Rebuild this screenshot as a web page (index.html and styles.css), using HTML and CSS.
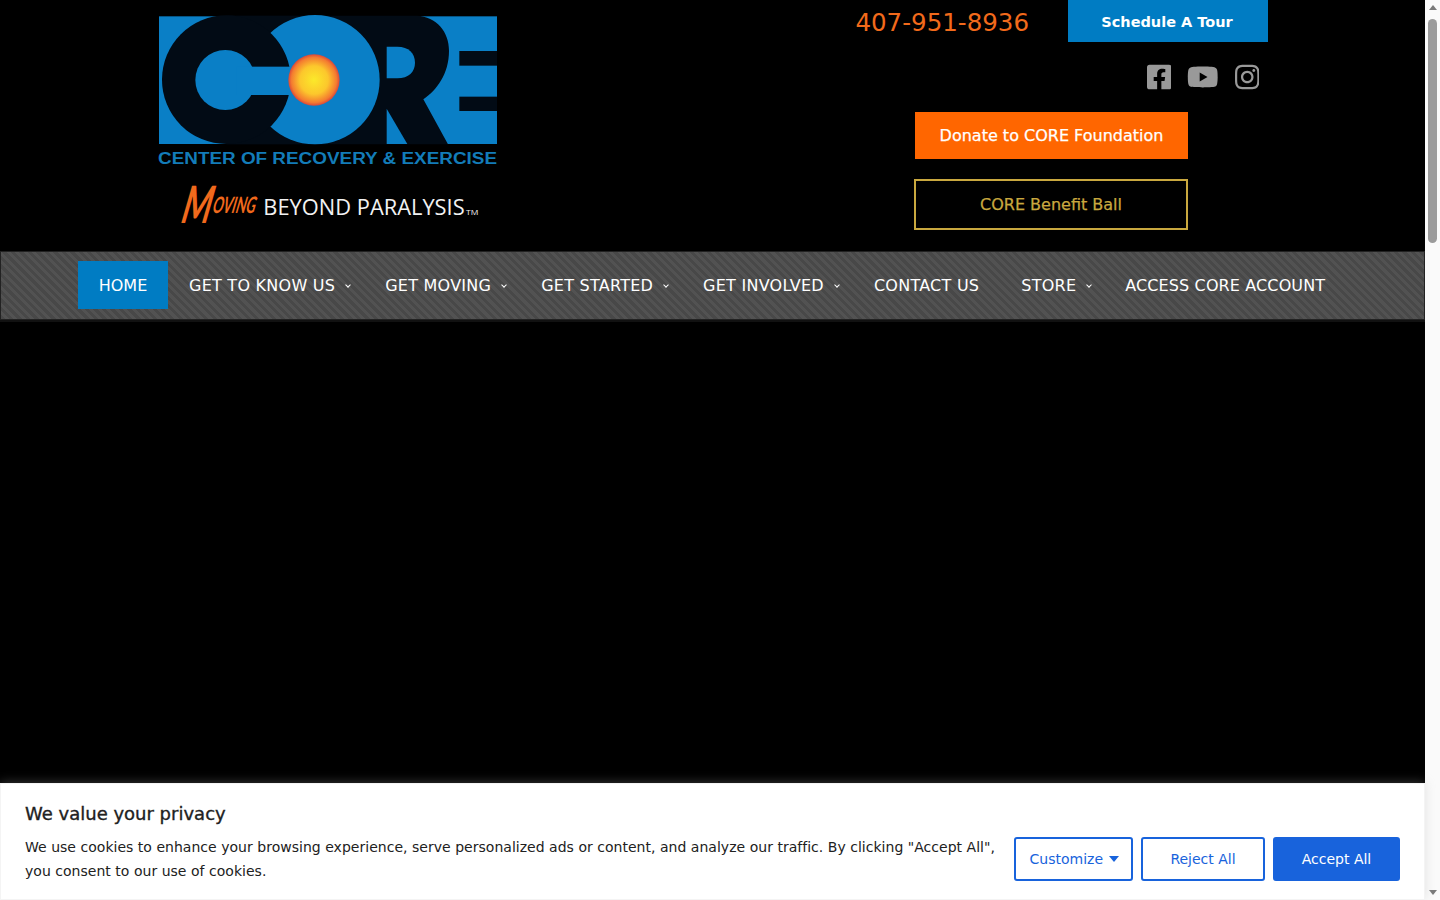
FILE: index.html
```html
<!DOCTYPE html>
<html lang="en">
<head>
    <meta charset="UTF-8">
    <meta name="viewport" content="width=device-width, initial-scale=1.0">
    <title>Center of Recovery &amp; Exercise</title>
    <link rel="stylesheet" href="styles.css">
</head>
<body>
    <div class="page">
        <div class="content">
            <header class="site-header">
                <a class="logo" href="#">
                    <svg viewBox="0 0 1140 720" width="380" height="240" role="img" aria-label="CORE logo">
                        <defs>
                            <radialGradient id="sun">
                                <stop offset="0" stop-color="#fbe92a"/>
                                <stop offset="0.55" stop-color="#fcc72c"/>
                                <stop offset="0.88" stop-color="#f47b30"/>
                                <stop offset="1" stop-color="#d9483a"/>
                            </radialGradient>
                        </defs>
                        <rect x="57" y="49" width="1014" height="383" fill="#0a7fc6"/>
                        <rect class="logo-dark" x="259" y="47" width="300" height="386"/>
                        <path class="logo-dark" d="M500 47H830C890 50 927 95 927 152C927 222 890 270 850 298L924 433H500Z"/>
                        <rect class="logo-dark" x="958" y="153" width="113" height="44"/>
                        <rect class="logo-dark" x="958" y="290" width="113" height="43"/>
                        <path d="M740 326L802 432H740Z" fill="#0a7fc6"/>
                        <circle cx="525" cy="239" r="194" fill="#0a7fc6"/>
                        <path d="M740 140H772C806 140 825 160 825 188C825 215 806 235 772 235H740Z" fill="#0a7fc6"/>
                        <circle class="logo-dark" cx="259" cy="239" r="193"/>
                        <circle cx="256" cy="240" r="90" fill="#0a7fc6"/>
                        <rect x="290" y="200" width="170" height="85" fill="#0a7fc6"/>
                        <circle cx="522" cy="240" r="77" fill="url(#sun)"/>
                        <text class="logo-name" x="54" y="493" textLength="1017" lengthAdjust="spacingAndGlyphs">CENTER OF RECOVERY &amp; EXERCISE</text>
                        <g transform="translate(124 640) skewX(-16)">
                            <text class="logo-moving logo-m" y="28" textLength="88" lengthAdjust="spacingAndGlyphs">M</text>
                            <text class="logo-moving" x="90" textLength="128" lengthAdjust="spacingAndGlyphs">OVING</text>
                        </g>
                        <text class="logo-tag" x="370" y="645" textLength="604" lengthAdjust="spacingAndGlyphs">BEYOND PARALYSIS</text>
                        <text class="logo-tm" x="978" y="646" textLength="37" lengthAdjust="spacingAndGlyphs">TM</text>
                    </svg>
                </a>
                <div class="header-right">
                    <div class="top-row">
                        <a class="phone" href="#">407-951-8936</a>
                        <a class="tour-btn" href="#">Schedule A Tour</a>
                    </div>
                    <div class="social">
                        <svg class="fb" viewBox="0 0 448 512"><path d="M400 32H48A48 48 0 0 0 0 80v352a48 48 0 0 0 48 48h137.25V327.69h-63V256h63v-54.64c0-62.15 37-96.48 93.67-96.48 27.14 0 55.52 4.84 55.52 4.84v61h-31.27c-30.81 0-40.42 19.12-40.42 38.73V256h68.78l-11 71.69h-57.78V480H400a48 48 0 0 0 48-48V80a48 48 0 0 0-48-48z"/></svg>
                        <svg class="yt" viewBox="0 0 576 512"><path d="M549.655 124.083c-6.281-23.65-24.787-42.276-48.284-48.597C458.781 64 288 64 288 64S117.22 64 74.629 75.486c-23.497 6.322-42.003 24.947-48.284 48.597-11.412 42.867-11.412 132.305-11.412 132.305s0 89.438 11.412 132.305c6.281 23.65 24.787 41.5 48.284 47.821C117.22 448 288 448 288 448s170.78 0 213.371-11.486c23.497-6.321 42.003-24.171 48.284-47.821 11.412-42.867 11.412-132.305 11.412-132.305s0-89.438-11.412-132.305zm-317.51 213.508V175.185l142.739 81.205-142.739 81.201z"/></svg>
                        <svg class="ig" viewBox="0 0 448 512"><path d="M224.1 141c-63.6 0-114.9 51.3-114.9 114.9s51.3 114.9 114.9 114.9S339 319.5 339 255.9 287.7 141 224.1 141zm0 189.6c-41.1 0-74.7-33.5-74.7-74.7s33.5-74.7 74.7-74.7 74.7 33.5 74.7 74.7-33.6 74.7-74.7 74.7zm146.4-194.3c0 14.9-12 26.8-26.8 26.8-14.9 0-26.8-12-26.8-26.8s12-26.8 26.8-26.8 26.8 12 26.8 26.8zm76.1 27.2c-1.7-35.9-9.9-67.7-36.2-93.9-26.2-26.2-58-34.4-93.9-36.2-37-2.1-147.9-2.1-184.9 0-35.8 1.7-67.6 9.9-93.9 36.1s-34.4 58-36.2 93.9c-2.1 37-2.1 147.9 0 184.9 1.7 35.9 9.9 67.7 36.2 93.9s58 34.4 93.9 36.2c37 2.1 147.9 2.1 184.9 0 35.9-1.7 67.7-9.9 93.9-36.2 26.2-26.2 34.4-58 36.2-93.9 2.1-37 2.1-147.8 0-184.8zM398.8 388c-7.8 19.6-22.9 34.7-42.6 42.6-29.5 11.7-99.5 9-132.1 9s-102.7 2.6-132.1-9c-19.6-7.8-34.7-22.9-42.6-42.6-11.7-29.5-9-99.5-9-132.1s-2.6-102.7 9-132.1c7.8-19.6 22.9-34.7 42.6-42.6 29.5-11.7 99.5-9 132.1-9s102.7-2.6 132.1 9c19.6 7.8 34.7 22.9 42.6 42.6 11.7 29.5 9 99.5 9 132.1s2.7 102.7-9 132.1z"/></svg>
                    </div>
                    <a class="donate-btn" href="#">Donate to CORE Foundation</a>
                    <a class="ball-btn" href="#">CORE Benefit Ball</a>
                </div>
            </header>

            <nav class="main-nav">
                <a class="nav-item active" href="#">HOME</a>
                <a class="nav-item has-sub" href="#">GET TO KNOW US</a>
                <a class="nav-item has-sub" href="#">GET MOVING</a>
                <a class="nav-item has-sub" href="#">GET STARTED</a>
                <a class="nav-item has-sub" href="#">GET INVOLVED</a>
                <a class="nav-item" href="#">CONTACT US</a>
                <a class="nav-item has-sub" href="#">STORE</a>
                <a class="nav-item nav-last" href="#">ACCESS CORE ACCOUNT</a>
            </nav>

            <div class="cookie-bar">
                <h2>We value your privacy</h2>
                <div class="cookie-body">
                    <p>We use cookies to enhance your browsing experience, serve personalized ads or content, and analyze our traffic. By clicking "Accept All", you consent to our use of cookies.</p>
                    <div class="cookie-actions">
                        <button class="btn-outline btn-customize">Customize <span class="caret"></span></button>
                        <button class="btn-outline btn-reject">Reject All</button>
                        <button class="btn-accept">Accept All</button>
                    </div>
                </div>
            </div>
        </div>

        <div class="scrollbar">
            <span class="arrow-up"></span>
            <div class="track"><div class="thumb"></div></div>
            <span class="arrow-down"></span>
        </div>
    </div>
</body>
</html>
```

FILE: styles.css
```css
html, body {
    margin: 0;
    height: 100%;
    overflow: hidden;
}

body {
    font-family: "DejaVu Sans", Verdana, sans-serif;
    background-color: #000;
    color: #fff;
}

a {
    text-decoration: none;
}

.page {
    display: flex;
    height: 900px;
}

.content {
    flex: 1;
    position: relative;
    min-width: 0;
}

/* header */
.site-header {
    display: flex;
    justify-content: space-between;
    height: 251px;
    padding: 0 157px 0 140px;
}

.logo {
    display: block;
    height: 240px;
}

.logo svg {
    display: block;
}

.logo-dark {
    fill: #020b15;
}

.logo-name {
    font-family: "Liberation Sans", Arial, sans-serif;
    font-weight: 700;
    font-size: 52px;
    fill: #137cb8;
}

.logo-moving {
    font-family: "Lato", sans-serif;
    font-weight: 700;
    font-size: 68px;
    fill: #f0691c;
}

.logo-m {
    font-size: 155px;
}

.logo-tag {
    font-family: "Open Sans", sans-serif;
    font-size: 64px;
    fill: #f2f2f2;
}

.logo-tm {
    font-family: "Open Sans", sans-serif;
    font-size: 24px;
    fill: #f2f2f2;
}

.header-right {
    display: flex;
    flex-direction: column;
    align-items: flex-end;
}

.top-row {
    display: flex;
    align-items: center;
    gap: 39px;
    height: 42px;
}

.phone {
    padding-top: 2px;
    color: #f26a1b;
    font-size: 24.5px;
}

.tour-btn {
    display: block;
    box-sizing: border-box;
    width: 200px;
    height: 42px;
    padding-right: 2px;
    line-height: 44px;
    text-align: center;
    background-color: #007cc3;
    color: #fff;
    font-size: 14.5px;
    font-weight: 700;
}

.social {
    display: flex;
    align-items: center;
    gap: 16px;
    height: 28px;
    margin: 21px 9px 0 0;
}

.social svg {
    display: block;
    height: 28px;
    fill: #999;
}

.fb, .ig {
    width: 24.5px;
}

.yt {
    width: 31.5px;
}

.donate-btn {
    width: 273px;
    margin: 21px 80px 0 0;
    line-height: 47px;
    text-align: center;
    background-color: #ff6600;
    color: #fff;
    font-size: 16px;
    -webkit-text-stroke: 0.25px #fff;
}

.ball-btn {
    box-sizing: border-box;
    width: 274px;
    height: 51px;
    margin: 20px 80px 0 0;
    line-height: 47px;
    text-align: center;
    border: 2px solid #c9a83f;
    color: #c9a83f;
    font-size: 16px;
    -webkit-text-stroke: 0.25px #c9a83f;
}

/* nav */
.main-nav {
    display: flex;
    align-items: center;
    box-sizing: border-box;
    height: 69px;
    padding: 0 0 1px 77px;
    border: 1px solid #222;
    background-color: #4d4d4d;
    background-image: repeating-linear-gradient(45deg, #484848 0, #484848 3px, #525252 3px, #525252 6px);
    box-shadow: 0 2px 0 #111;
}

.nav-item {
    display: block;
    height: 48px;
    padding: 0 21px;
    line-height: 50px;
    color: #fff;
    font-size: 16px;
    letter-spacing: 0.25px;
    white-space: nowrap;
}

.nav-item.active {
    width: 90px;
    box-sizing: border-box;
    padding: 0;
    text-align: center;
    letter-spacing: 0;
    background-color: #007cc3;
}

.nav-last {
    margin-left: -1px;
    letter-spacing: 0.12px;
}

.has-sub {
    padding-right: 29px;
    position: relative;
}

.has-sub::after {
    content: "";
    position: absolute;
    right: 14px;
    top: 22px;
    width: 3px;
    height: 3px;
    border-right: 1px solid #fff;
    border-bottom: 1px solid #fff;
    transform: rotate(45deg);
}

/* cookie bar */
.cookie-bar {
    position: absolute;
    left: 0;
    right: 0;
    bottom: 0;
    box-sizing: border-box;
    height: 117px;
    padding: 20px 24px 0 24px;
    background-color: #fff;
    border: 1px solid #f4f4f4;
    box-shadow: 0 -1px 10px 0 rgba(172, 171, 171, 0.3);
    color: #212121;
}

.cookie-bar h2 {
    margin: 0 0 11px;
    font-size: 18px;
    font-weight: 500;
    line-height: 20px;
    -webkit-text-stroke: 0.35px #212121;
}

.cookie-body {
    display: flex;
    justify-content: space-between;
    align-items: center;
}

.cookie-body p {
    width: 975px;
    margin: 0;
    font-size: 14px;
    line-height: 24px;
    letter-spacing: 0.024px;
}

.cookie-actions {
    display: flex;
    gap: 8px;
}

.cookie-actions button {
    box-sizing: border-box;
    height: 44px;
    border-radius: 3px;
    font-family: inherit;
    font-size: 14px;
    padding: 0;
}

.btn-outline {
    background: #fff;
    border: 2px solid #1863dc;
    color: #1863dc;
}

.btn-customize {
    width: 119px;
    padding-left: 2px !important;
}

.btn-reject {
    width: 124px;
}

.btn-accept {
    width: 127px;
    background: #1863dc;
    border: 2px solid #1863dc;
    color: #fff;
}

.caret {
    display: inline-block;
    margin-left: 2px;
    vertical-align: 2px;
    border-left: 5px solid transparent;
    border-right: 5px solid transparent;
    border-top: 6px solid #1863dc;
}

/* scrollbar */
.scrollbar {
    display: flex;
    flex-direction: column;
    align-items: center;
    width: 15px;
    background-color: #fafafa;
}

.track {
    flex: 1;
    padding-top: 4px;
}

.thumb {
    width: 9px;
    height: 224px;
    border-radius: 5px;
    background-color: #9b9b9b;
}

.arrow-up, .arrow-down {
    display: block;
    width: 0;
    margin: 5px 0;
    border-left: 4.5px solid transparent;
    border-right: 4.5px solid transparent;
}

.arrow-up {
    border-bottom: 5px solid #7a7a7a;
}

.arrow-down {
    border-top: 5px solid #7a7a7a;
}
```
